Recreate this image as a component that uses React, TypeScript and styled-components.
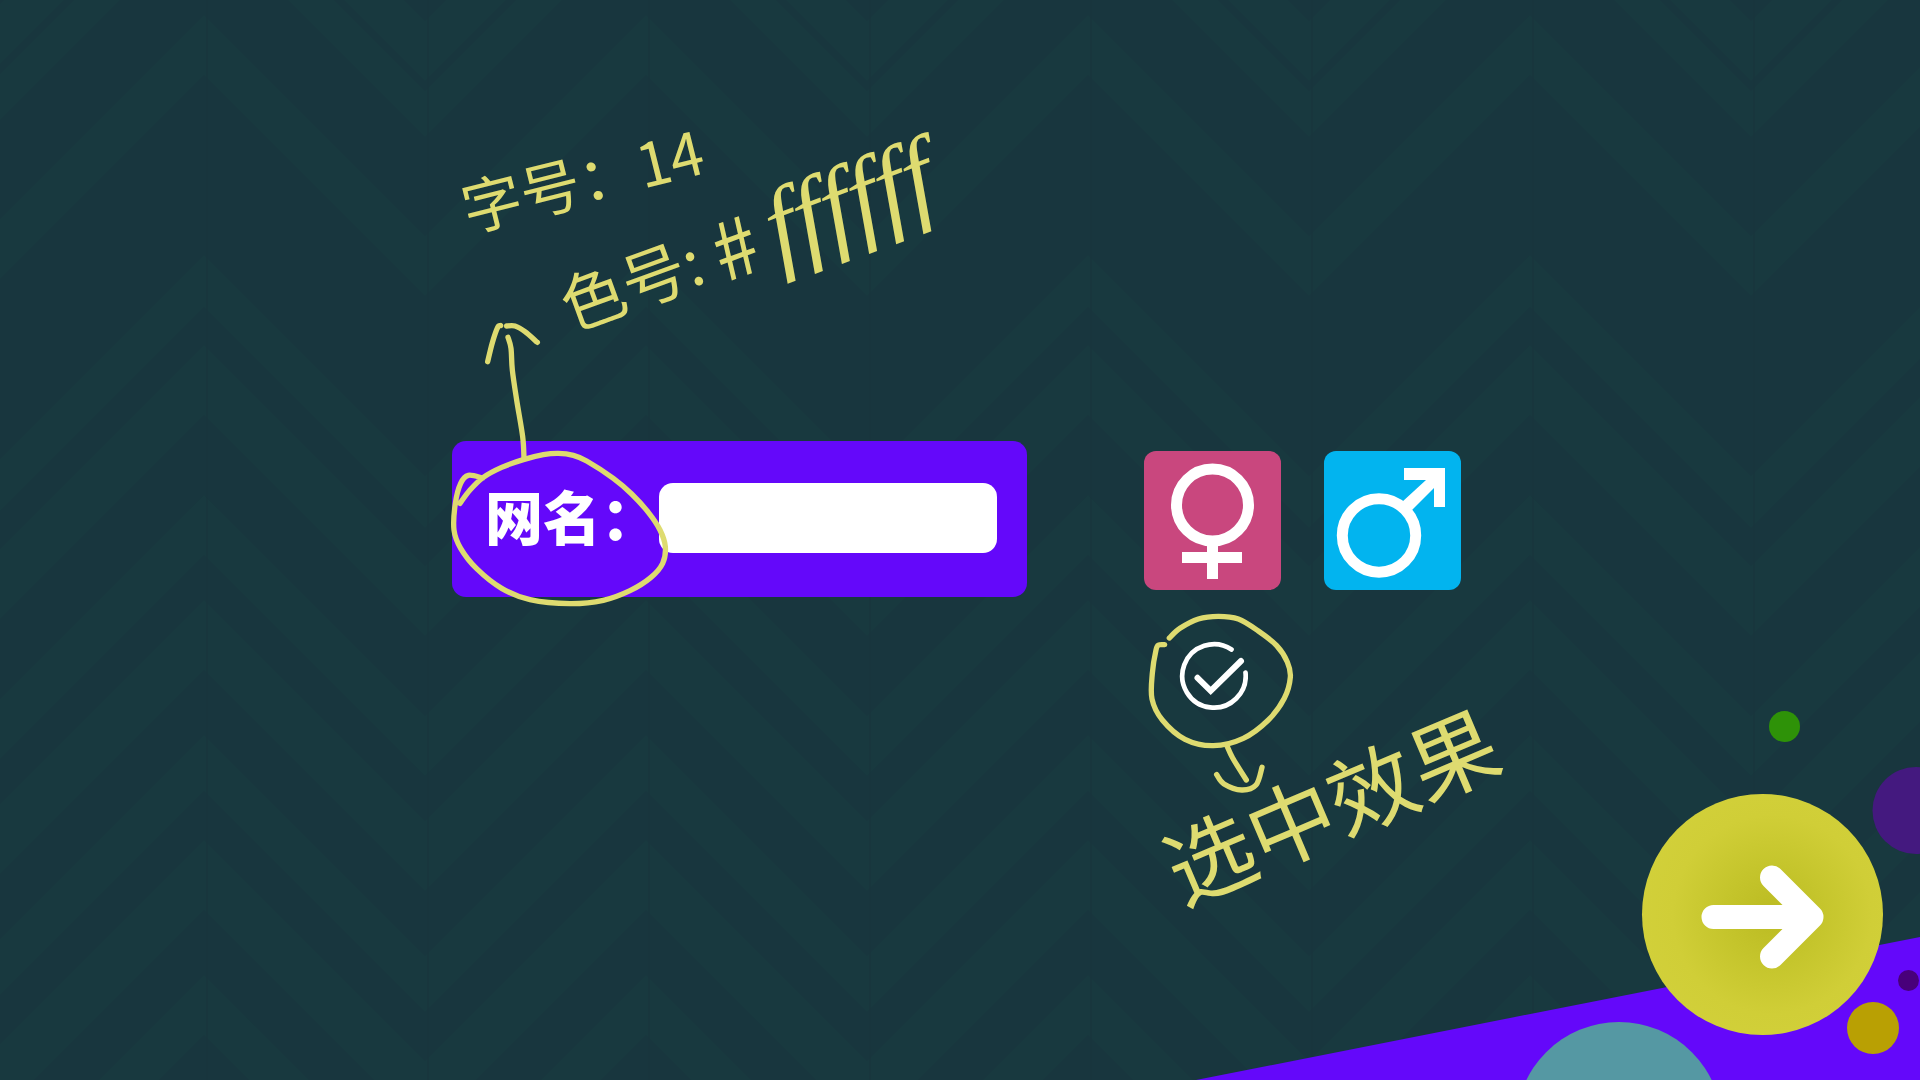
import React, { useState } from "react";
import styled, { createGlobalStyle } from "styled-components";

const colors = {
  board: "#18363e",
  chevron: "#18393f",
  seam: "#18353c",
  violet: "#6408fa",
  pink: "#c9477e",
  blue: "#02b4ef",
  ink: "#dedb70",
};

const GlobalStyle = createGlobalStyle`
  * { box-sizing: border-box; }
  body {
    margin: 0;
    background: ${colors.board};
    font-family: "Noto Sans CJK SC", "Noto Sans", sans-serif;
  }
`;

const Page = styled.main`
  position: relative;
  min-height: 100vh;
  padding: 441px 24px 48px;
  overflow: hidden;
  background: ${colors.board};
`;

const Backdrop = styled.svg`
  position: absolute;
  inset: 0;
  width: 100%;
  height: 100%;
`;

const Form = styled.form`
  position: relative;
  display: flex;
  align-items: flex-start;
  gap: 117px;
  max-width: 1016px;
  margin: 0 auto;
`;

const NamePanel = styled.div`
  display: flex;
  align-items: center;
  width: 575px;
  height: 156px;
  padding: 0 30px 2px 33px;
  border-radius: 14px;
  background: ${colors.violet};
`;

const NameLabel = styled.label`
  flex: none;
  padding-bottom: 6px;
  color: #fff;
  font-size: 58px;
  font-weight: 900;
  line-height: 70px;
`;

const NameInput = styled.input`
  flex: 1;
  min-width: 0;
  height: 70px;
  padding: 0 20px;
  border: 0;
  border-radius: 14px;
  background: #fff;
  color: #222;
  font: inherit;
  font-size: 28px;
`;

const Genders = styled.fieldset`
  display: flex;
  gap: 43px;
  margin: 0;
  padding: 10px 0 0;
  border: 0;
`;

const GenderOption = styled.label`
  display: flex;
  flex-direction: column;
  align-items: center;
  gap: 51px;
  cursor: pointer;
`;

const HiddenRadio = styled.input`
  position: absolute;
  opacity: 0;
  pointer-events: none;
`;

const GenderTile = styled.span<{ $color: string }>`
  display: block;
  width: 137px;
  height: 139px;
  border-radius: 12px;
  background: ${(p) => p.$color};
`;

const CheckIcon = styled.svg<{ $shown: boolean }>`
  width: 70px;
  height: 70px;
  visibility: ${(p) => (p.$shown ? "visible" : "hidden")};
`;

const Annotations = styled.div`
  position: absolute;
  inset: 0;
  pointer-events: none;
`;

const Ink = styled.svg`
  position: absolute;
  top: 0;
  left: 0;
  overflow: visible;
  fill: none;
  stroke: ${colors.ink};
  stroke-width: 16;
  stroke-linecap: round;
  stroke-linejoin: round;
`;

const Note = styled.p<{ $x: number; $y: number; $angle: number; $size: number }>`
  position: absolute;
  left: ${(p) => p.$x}px;
  top: ${(p) => p.$y}px;
  display: flex;
  align-items: center;
  height: 0;
  margin: 0;
  color: ${colors.ink};
  font-size: ${(p) => p.$size}px;
  font-weight: 400;
  line-height: 1;
  white-space: pre;
  transform: rotate(${(p) => p.$angle}deg);
  transform-origin: left center;
`;

const Hash = styled.span`
  padding: 0 14px;
  font-size: 80px;
`;

const Cursive = styled.span`
  font-family: "Liberation Serif", serif;
  font-size: 104px;
  font-style: italic;
`;

const Corner = styled.svg`
  position: absolute;
  right: 0;
  bottom: 0;
  width: 740px;
  height: 380px;
`;

const NextButton = styled.button`
  position: absolute;
  right: 37px;
  bottom: 45px;
  width: 241px;
  height: 241px;
  padding: 0;
  border: 0;
  border-radius: 50%;
  background: radial-gradient(circle at 54% 50%, #bbbb22 0, #c5c52c 28%, #d0ce37 56%, #d2d03a 78%);
  cursor: pointer;
`;

type Point = [number, number];

/* Turns a list of pen positions into a smooth stroke. */
const stroke = (pts: Point[]) => {
  let d = `M${pts[0][0]} ${pts[0][1]}`;
  for (let i = 0; i < pts.length - 1; i++) {
    const a = pts[i - 1] ?? pts[i];
    const b = pts[i];
    const c = pts[i + 1];
    const e = pts[i + 2] ?? c;
    d += `C${b[0] + (c[0] - a[0]) / 6} ${b[1] + (c[1] - a[1]) / 6} ${c[0] - (e[0] - b[0]) / 6} ${c[1] - (e[1] - b[1]) / 6} ${c[0]} ${c[1]}`;
  }
  return d;
};

const nameMarks: Point[][] = [
  [[60, 580], [90, 540], [130, 502], [185, 472], [250, 449], [310, 434], [355, 430], [400, 436], [440, 453], [520, 505], [575, 552], [625, 607], [660, 660], [676, 710], [668, 760], [632, 803], [570, 842], [490, 871], [390, 881], [270, 869], [185, 835], [110, 776], [62, 715], [42, 660], [46, 580], [62, 520], [85, 496], [128, 504]],
  [[252, 445], [248, 380], [230, 270], [217, 180], [213, 115], [204, 82]],
  [[143, 155], [157, 98], [173, 52], [182, 47]],
  [[200, 48], [225, 48], [255, 65], [292, 97]],
];

const checkMarks: Point[][] = [
  [[118, 114], [150, 85], [205, 57], [265, 49], [325, 57], [385, 93], [440, 137], [472, 186], [481, 232], [463, 295], [415, 360], [340, 415], [250, 437], [165, 418], [97, 360], [66, 297], [67, 220], [78, 150], [86, 135], [104, 134]],
  [[292, 440], [308, 474], [349, 540]],
  [[260, 524], [282, 552], [335, 570], [378, 555], [396, 502]],
];

const columns = Array.from({ length: 6 }, (_, i) => 204 + i * 442);

function Chevrons() {
  const bands = [
    [-200, 60],
    [-130, 46],
    [15, 60],
    [255, 52],
    [345, 70],
    [495, 60],
    [600, 70],
    [735, 56],
    [840, 70],
    [975, 60],
  ];
  const zigzag = (y: number, h: number) => {
    const top: string[] = [`-17 ${y + 221}`];
    const bottom: string[] = [`-17 ${y + h + 221}`];
    columns.forEach((x) => {
      top.push(`${x} ${y}`, `${x + 221} ${y + 221}`);
      bottom.push(`${x} ${y + h}`, `${x + 221} ${y + h + 221}`);
    });
    return `M${top.join("L")}L${bottom.reverse().join("L")}Z`;
  };
  return (
    <Backdrop aria-hidden="true">
      {bands.map(([y, h]) => (
        <path key={y} d={zigzag(y, h)} fill={colors.chevron} />
      ))}
      {columns.map((x) => (
        <path key={x} d={`M${x + 3} 0V2000M${x + 224} 0V2000`} stroke={colors.seam} strokeWidth="1" />
      ))}
    </Backdrop>
  );
}

function FemaleIcon() {
  return (
    <svg width="137" height="139" viewBox="0 0 137 139" fill="none" stroke="#fff" strokeWidth="11" aria-hidden="true">
      <circle cx="68.5" cy="54" r="36" />
      <path d="M68.5 92V128M38 106.5H98" />
    </svg>
  );
}

function MaleIcon() {
  return (
    <svg width="137" height="139" viewBox="0 0 137 139" aria-hidden="true">
      <circle cx="55" cy="84.5" r="36.7" fill="none" stroke="#fff" strokeWidth="11" />
      <path d="M80 17H121V56H110V37L88 59L78 51L102 29H80Z" fill="#fff" />
    </svg>
  );
}

const genders = [
  { id: "female", name: "女", color: colors.pink, Icon: FemaleIcon },
  { id: "male", name: "男", color: colors.blue, Icon: MaleIcon },
];

export default function App() {
  const [gender, setGender] = useState("female");

  return (
    <>
      <GlobalStyle />
      <Page>
        <Chevrons />
        <Corner viewBox="1180 700 740 380" aria-hidden="true">
          <path d="M1196 1080L1920 937V1080Z" fill={colors.violet} />
          <circle cx="1619" cy="1125" r="103" fill="#5598a3" />
          <circle cx="1784.5" cy="726.5" r="15.5" fill="#2e9208" />
          <circle cx="1916" cy="810.5" r="43.5" fill="#44197f" />
          <circle cx="1908.5" cy="980.5" r="10.5" fill="#48007a" />
          <circle cx="1873" cy="1028" r="26" fill="#b9a003" />
        </Corner>

        <Form onSubmit={(e) => e.preventDefault()}>
          <NamePanel>
            <NameLabel htmlFor="nickname">网名：</NameLabel>
            <NameInput id="nickname" type="text" />
          </NamePanel>

          <Genders>
            {genders.map(({ id, name, color, Icon }) => (
              <GenderOption key={id}>
                <HiddenRadio
                  type="radio"
                  name="gender"
                  value={id}
                  aria-label={name}
                  checked={gender === id}
                  onChange={() => setGender(id)}
                />
                <GenderTile $color={color}>
                  <Icon />
                </GenderTile>
                <CheckIcon
                  $shown={gender === id}
                  viewBox="-36 -35 70 70"
                  fill="none"
                  stroke="#fff"
                  strokeLinecap="round"
                  aria-hidden="true"
                >
                  <path d="M17.5 -26.5A31.7 31.7 0 1 0 31.5 -3.5" strokeWidth="4.7" />
                  <path d="M-16.5 1.8L-3.3 14.8L27 -15" strokeWidth="6" />
                </CheckIcon>
              </GenderOption>
            ))}
          </Genders>

          <Annotations>
            <Ink width="1016" height="300" viewBox="452 441 1016 300" aria-hidden="true">
              <g transform="translate(440 310) scale(0.33333)">
                {nameMarks.map((pts, i) => (
                  <path key={i} d={stroke(pts)} />
                ))}
              </g>
              <g transform="translate(1130 600) scale(0.33333)">
                {checkMarks.map((pts, i) => (
                  <path key={i} d={stroke(pts)} />
                ))}
              </g>
            </Ink>
            <Note $x={10} $y={-234} $angle={-14} $size={60}>
              字号：14
            </Note>
            <Note $x={110} $y={-136} $angle={-20} $size={64}>
              色号:<Hash>#</Hash>
              <Cursive>ffffff</Cursive>
            </Note>
            <Note $x={716} $y={430} $angle={-23} $size={88}>
              选中效果
            </Note>
          </Annotations>
        </Form>

        <NextButton type="button" aria-label="下一步">
          <svg
            width="241"
            height="241"
            viewBox="1642 794 241 241"
            fill="none"
            stroke="#fff"
            strokeWidth="24"
            strokeLinecap="round"
            strokeLinejoin="round"
            aria-hidden="true"
          >
            <path d="M1713.5 917H1811M1772 877.5L1811.5 917L1772 956.5" />
          </svg>
        </NextButton>
      </Page>
    </>
  );
}
